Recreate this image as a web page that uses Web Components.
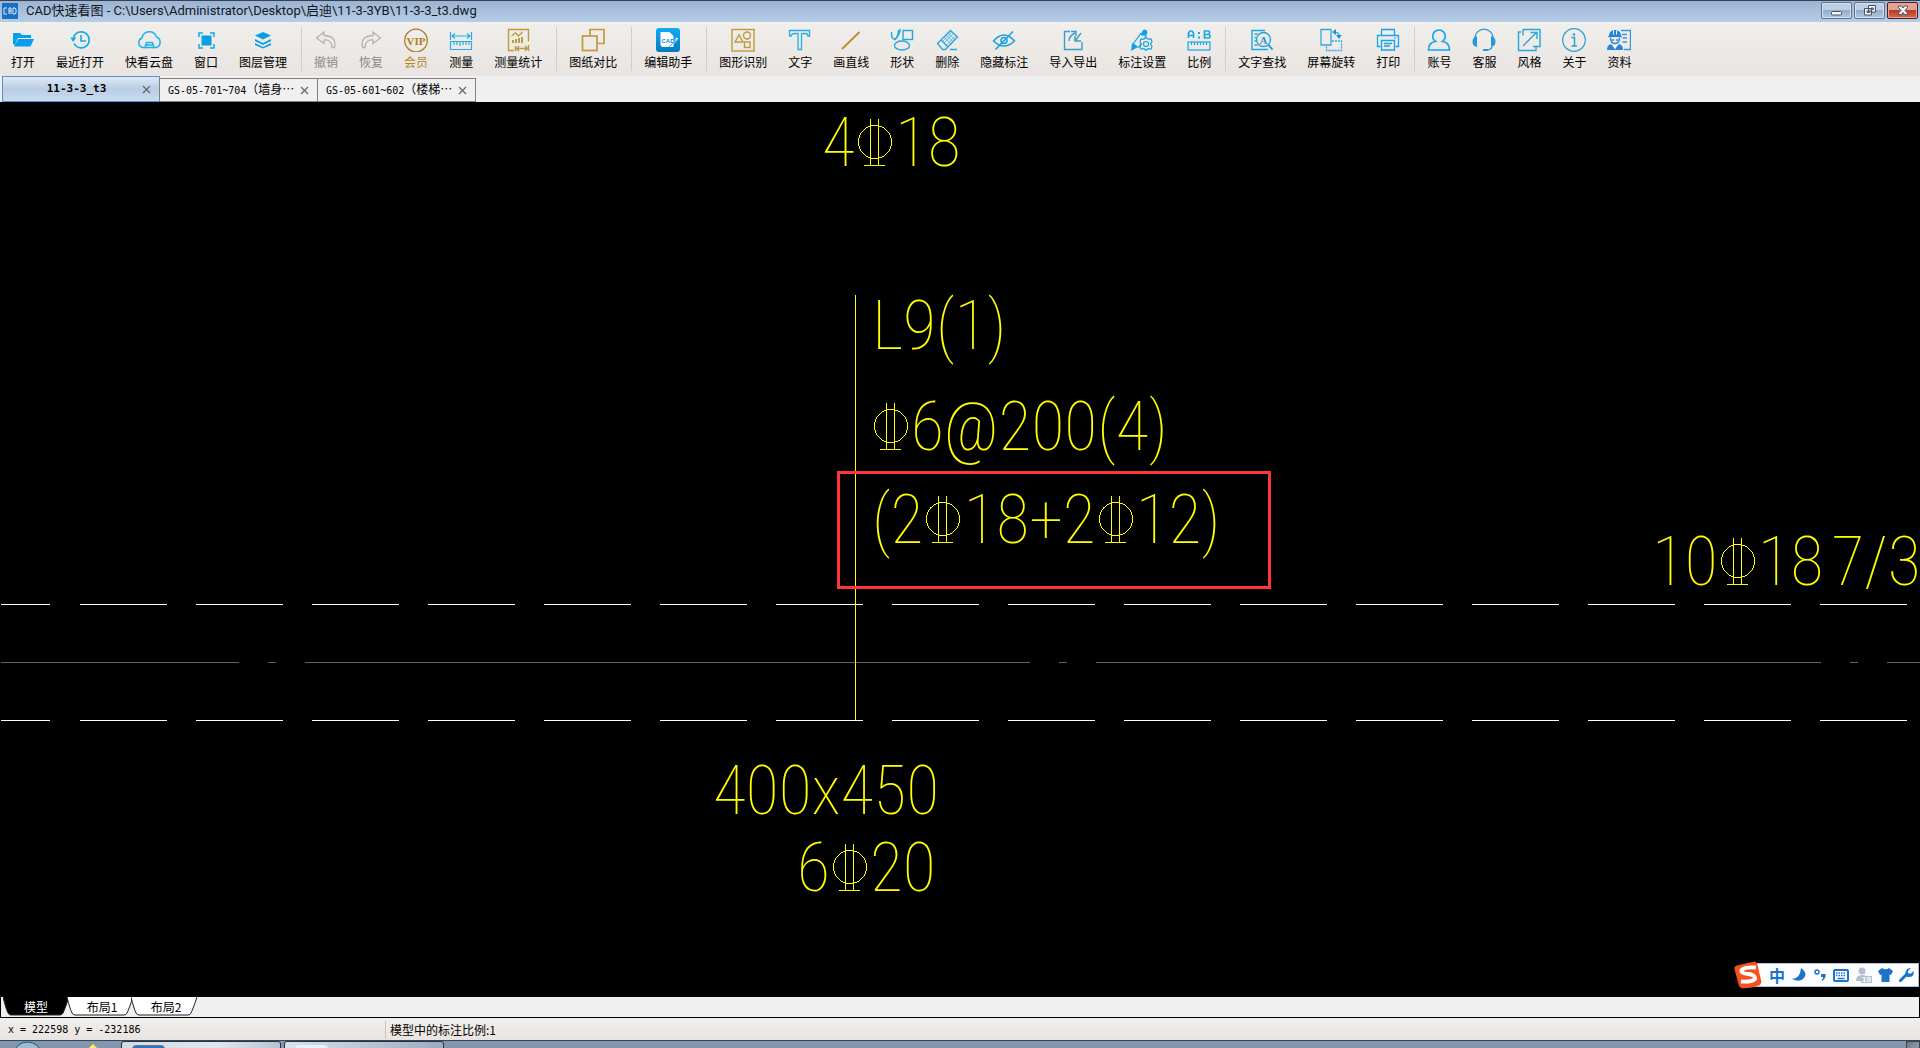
<!DOCTYPE html>
<html lang="zh-CN">
<head>
<meta charset="utf-8">
<title>CAD快速看图</title>
<style>
html,body{margin:0;height:100%}
body{overflow:hidden;font-family:"Liberation Sans","Noto Sans CJK SC",sans-serif;font-size:12px;color:#000;background:#000}
</style>
</head>
<body>
<cad-app></cad-app>
<script>
const define=(name,html,setup)=>{
  const tpl=document.createElement('template');
  tpl.innerHTML=html;
  customElements.define(name,class extends HTMLElement{
    constructor(){super();this.attachShadow({mode:'open'})}
    connectedCallback(){
      if(this.shadowRoot.childNodes.length)return;
      this.shadowRoot.append(tpl.content.cloneNode(true));
      if(setup)setup.call(this,this.shadowRoot);
    }
  });
};
const B='#16a9ea',G='#c09a3e';
const s=(c,w,body)=>`<g fill="none" stroke="${c}" stroke-width="${w}">${body}</g>`;
const ICONS={
open:`<path fill="#079feb" d="M2 5h7l2 2h9v3H7l-3 7-2-1z"/><path fill="#079feb" d="M7.500 11H23l-3.500 7.500H3z"/>`,
recent:s(B,1.600,`<path d="M5.500 9.500a8 8 0 1 1 .5 6"/><path d="M13 7v6h5"/>`)+`<path fill="${B}" d="M2.500 9.500h6L5 14z"/>`,
cloud:s('#1eb0f0',1.500,`<path d="M8.500 19.500H5.500A5 5 0 0 1 5 10a7.500 7.500 0 0 1 14.500-1A5.500 5.500 0 0 1 19 19.500h-2"/><path d="M8 19.500l1.500-5h6l1.500 5zM8.500 17h8"/>`),
window:s(B,1.500,`<path d="M5 9V5h4M16 5h4v4M20 16v4h-4M9 20H5v-4"/>`)+`<rect x="7.500" y="7.500" width="10" height="10" fill="#0c9ee4"/>`,
layers:`<path fill="#089de6" d="M12 4l8 3.500-8 4-8-4zM4 11l8 4 8-4v2l-8 4-8-4zM4 15l8 4 8-4v2l-8 3.500-8-3.500z"/>`,
undo:s('#b4b4b4',1.300,`<path d="M10 4L2.500 10 10 15.500V12q8-.5 8 7.500h2.500Q23 8 10 7.500z"/>`),
redo:s('#b4b4b4',1.300,`<path d="M14 4l7.500 6L14 15.500V12q-8-.5-8 7.500H3.500Q1 8 14 7.500z"/>`),
vip:s('#ac7d2d',1.300,`<circle cx="12" cy="12.500" r="11.300"/>`)+`<text x="2.500" y="17" fill="#b07d20" font-family="Liberation Serif" font-weight="700" font-size="11">VIP</text>`,
measure:s('#26aeea',1.200,`<path d="M1.500 4v8M22.500 4v8M3 8h18M6 5.500L3 8l3 2.500M18 5.500L21 8l-3 2.500M1.500 13.500h21v8h-21zM5 14v3M8 14v3M11 14v4M14 14v3M17 14v3M20 14v3"/>`),
stat:s(G,1.400,`<path d="M8 22.500H2.500v-21h20v12M5.500 8l4-3 3 3 4-4M9.500 18v5M22.500 17v6M11 20.500h10M13 18l-2.500 2.500L13 23M19 18l2.500 2.500L19 23"/><path stroke-width="2" d="M7 15v-3M10 15v-4M13 15v-5M16 15V9"/>`),
compare:s(G,1.700,`<path d="M9 8V1.500h14v14h-7"/><rect x="1.500" y="8" width="14.500" height="14.500"/>`),
edit:`<defs><linearGradient id="e" x2="0" y2="1"><stop stop-color="#12aaf0"/><stop offset="1" stop-color="#0479c4"/></linearGradient></defs><rect width="24" height="24" rx="3" fill="url(#e)"/><path fill="#fff" d="M4.500 4h9l4 4v11H6l-1.500-2z"/><path stroke="#fff" stroke-width="2" d="M14 18l7.500-8"/><path stroke="#0a86d0" stroke-width=".8" d="M13 19l7.500-8"/><text x="5.500" y="14.500" font-size="6" font-weight="700" fill="#0c8dd6" font-family="Liberation Sans">CAD</text>`,
recog:s(G,1.400,`<rect x="1" y="1.500" width="22" height="21.500"/><path d="M4 14l4-7 4 7z"/><circle cx="16" cy="7.500" r="3.500"/><rect x="13.500" y="14" width="5.500" height="5.500"/>`),
text:s('#27aee9',1.300,`<path d="M1.500 2.500h20v5.500h-1.500q0-2.500-3-2.500h-3.500v16h-3.500v-16H6.500q-3 0-3.500 2.500H1.500z"/>`),
line:s('#b98b35',1.800,`<path d="M3 21L20.500 4"/>`),
shape:s('#27a6e0',1.400,`<path d="M1.500 4q0 8 3 7t4-8l1.500-1-.5 3q-3 6-5 7"/><rect x="13" y="2.500" width="9.500" height="9"/><ellipse cx="12" cy="17.500" rx="7.500" ry="4.500"/>`),
erase:s('#2aa6df',1.300,`<path d="M2.500 15.500L15.500 2.500l7 6.500-12 12.500H7.500zM6 12l7 7M15 21.500h7"/><path stroke-width=".7" d="M9 9l7.500 7M11 7l7.500 7M13 5l7.500 7M19 5l-10 10M21 7.500l-10 10M17 3.500L7.500 13.500"/>`),
hide:s('#15a2e4',1.500,`<path d="M1.500 13Q12 1 22.500 13 12 23 1.500 13z"/><circle cx="12" cy="12.500" r="3"/><path d="M21 3.500L3.500 21.500"/>`),
inout:s('#3b9ccb',1.400,`<path d="M9 3.500H3.500v18H21V14"/><path d="M8 13q0-5 6-8M10 3.500h5v4.500M20 5l-5.500 7.500M14 8v5h6"/>`),
annoset:`<path fill="#0ea0e8" d="M13 2q4-2 4.500 3l-2 3-5-1zM2 15l4 2 2 2-7 4z"/>`+s('#13a2e7',1.200,`<path d="M11 5L2.500 17M16.500 7.500L8 20"/><path fill="#eeece8" d="M16 9.500l2 1.700 3-.4 1 3-1.500 2.200 1.500 2.500-1 2.500-3-.3-2 1.800-2-1.800-3 .3-1-2.500 1.500-2.500-1.500-2.200 1-3 3 .4z"/><circle cx="16" cy="16" r="2.500"/>`),
ratio:`<path fill="none" stroke="${B}" stroke-width="1.700" d="M1.500 10V5l1.500-2h2l1.500 2v5M1.500 7.500h5M17.500 3h4l1 1v1.500l-1 1h-4zM17.500 6.500h4.500l1 1v1.500l-1 1h-4.500z"/><path fill="${B}" d="M11 4h2v2h-2zM11 8.500h2v2h-2z"/>`+s(B,1.200,`<rect x="1" y="14" width="22" height="8"/><path d="M4.500 14v3M7.500 14v3M10.500 14v3M13.500 14v3M16.500 14v3M19.500 14v3"/>`),
find:s('#22a6e2',1.400,`<path d="M15 2.500H2v19h16M4.500 6h3M4.500 9.500h1.500M4.500 13h1.500M4.500 17h3"/><circle cx="13.500" cy="11.500" r="7"/><path stroke-width="2" d="M18.500 17l4 4.500"/>`)+`<text x="9.500" y="16" font-size="11" font-weight="700" fill="#2596d0" font-family="Liberation Serif">A</text>`,
rotate:s('#2fa8e0',1.300,`<path d="M2 1.500h10v15.500H2z"/><path stroke-dasharray="2 1" d="M13 13h9.500v9.500H7.500V18"/><path d="M15 4.500q5-1 5 4"/>`)+`<path fill="#1596d8" d="M17 1v6l-4-3zM17 7h6l-3 4z"/>`,
print:s('#1aa5e6',1.300,`<path d="M5.500 7.500V1.500h13v6M4.500 18.500H1.500v-11h21v11h-3M5.500 12.500h13v9.500h-13zM8 15.500h8M8 18h6"/>`)+`<path fill="${B}" d="M18 9.500h2v1h-2z"/>`,
account:s('#11a5f0',1.600,`<path d="M8.500 13.500a6.300 6.300 0 1 1 7 0q7 1 7 8.500h-21q0-7.500 7-8.500z"/>`),
service:s('#2b9dd8',1.300,`<path d="M3 12C2 -2.500 22 -2.500 21 12M20 19q-1 3-6 3"/>`)+`<path fill="#2598db" d="M5 8v11q-4.500-1-4.500-5.500T5 8zM19 8v11q4.500-1 4.500-5.500T19 8zM11 21h5v2h-5z"/>`,
style:s('#2aa5dd',1.400,`<path d="M6 1.500h17v17H16M4 4H1.500v18.500H19V19M6 1.500v6M6 18L20 4M13.500 4.500H20V11"/>`),
about:s('#2b9fd8',1.200,`<circle cx="12" cy="12" r="11.300"/><path stroke-width="1.500" d="M9.500 9.500h3v8M9.500 18h5.500"/>`)+`<circle cx="12" cy="6.500" r="1.300" fill="#2b9fd8"/>`,
docs:`<path fill="#2587dc" d="M2 8q0-5 5-6h2q5 1 5 6h1v1H1V8zM0 22q0-5 4-6l4 5 4-5q4 1 4 6z"/><path fill="#fff" d="M6 2.500h1v4H6zM9 2.500h1v4H9zM6 17h4l-2 4z"/>`+s('#2587dc',1.400,`<path d="M3.500 9.500q0 6 4.500 6t4.500-6M5 12h2M9 12h2"/>`)+s('#3798e0',1.400,`<path d="M14 2.500h9.500v19H17M15 6.500h5M15.500 10h4.500M15.500 14h4.500"/>`)
};

define('window-button',`<style>
:host{display:block}
button{display:grid;place-items:center;width:31px;height:17px;padding:0;border:1px solid #5c7595;border-radius:2px;box-shadow:inset 0 0 0 1px #d2e0f0;background:linear-gradient(#bccfe4 48%,#92adca 50%,#b3cbe4)}
:host([kind=close]) button{border-color:#541a24;box-shadow:inset 0 0 0 1px #e2a49c;background:linear-gradient(#e2a294 48%,#bd3a22 50%,#cf6b50)}
svg{display:block}
</style><button><svg width="14" height="11" fill="#f4f7fb" stroke="#4a5364"></svg></button>`,function(r){
  const k=this.getAttribute('kind');
  r.querySelector('svg').innerHTML={
    min:'<rect x="1.500" y="6.500" width="10" height="3.500" rx="1"/>',
    restore:'<path d="M5.500 .5h7v6.500h-7zM8 3h2.500v1.500H8zM1.500 3.500h7v6.500h-7zM4 6h2v1.500H4z" fill-rule="evenodd"/>',
    close:'<path d="M2.500 1h3L7 3l1.500-2h3v1.500L9 5.500l2.500 2.500v1.500h-3L7 7.500 5.500 9.500h-3V8L5 5.500 2.500 2.500z"/>'}[k];
  const names={min:'最小化',restore:'还原',close:'关闭'};
  r.querySelector('button').setAttribute('aria-label',names[k]);
});

define('title-bar',`<style>
:host{display:flex;align-items:center;box-sizing:border-box;height:22px;flex:none;padding:0 2px 2px;border-top:1px solid #3b3f4a;background:linear-gradient(#9ab4d3,#b6cde6);gap:8px}
h1{flex:1;margin:0;font:400 13px/18px Roboto,"Noto Sans CJK SC",sans-serif;color:#14171c;white-space:nowrap}
.b{display:flex;gap:2px;align-self:flex-start;padding-top:1px}
svg{flex:none}
</style><svg width="16" height="16"><rect width="16" height="16" rx="1" fill="#1a6fc0"/><path d="M5 5H2v6h3M7 11V5h2v6M7 8h2M11 5h2l1 1v4l-1 1h-2z" fill="none" stroke="#d8ecff"/></svg><h1><slot></slot></h1><div class="b"><window-button kind="min"></window-button><window-button kind="restore"></window-button><window-button kind="close"></window-button></div>`);

define('tool-button',`<style>
:host{display:block;flex:none}
button{display:flex;flex-direction:column;align-items:center;gap:2px;border:0;background:none;padding:6px 11px 0 10px;font:12px/16px "Noto Sans CJK SC",sans-serif;color:#000;white-space:nowrap}
:host([tone=off]) button{color:#8c8c8c}
:host([tone=gold]) button{color:#b8872c}
svg{display:block}
</style><button><svg width="24" height="24" viewBox="0 0 24 24"></svg><span><slot></slot></span></button>`,function(r){r.querySelector('svg').innerHTML=ICONS[this.getAttribute('icon')]});

define('tool-group',`<style>:host{display:flex;flex:none}
:host(:not(:last-of-type))::after{content:"";width:1px;margin:5px 2px 5px 3px;background:#cfcfcf}</style><slot></slot>`);

define('tool-bar',`<style>:host{display:flex;flex:none;box-sizing:border-box;height:54px;padding-left:1px;background:linear-gradient(#f0efeb,#e9e4e1);overflow:hidden}</style><slot></slot>`);

define('doc-tab',`<style>
:host{display:flex;align-items:center;box-sizing:border-box;width:159px;height:24px;padding:0 8px;border:1px solid #808080;background:#f0f0f0;margin-left:-1px;font:10px/16px "DejaVu Sans Mono","Noto Sans CJK SC",monospace}
:host([active]){width:158px;height:26px;margin-left:0;border-color:#5c8fce;background:linear-gradient(#dfe9f5,#b9cde5 50%,#c9dbee);font-size:11px;font-weight:700}
.t{flex:1;white-space:nowrap}
:host([active]) .t{text-align:center}
button{border:0;background:none;padding:0;display:block}
svg{display:block}
</style><span class="t"><slot></slot></span><button aria-label="关闭标签"><svg width="9" height="9"><path d="M1 1l7 7M8 1L1 8" stroke="#666" stroke-width="1.200"/></svg></button>`);
define('doc-tabs',`<style>:host{display:flex;flex:none;align-items:flex-end;height:26px;padding-left:2px;background:#f0f0f0}
::slotted(*){flex:none}</style><slot></slot>`);

define('rebar-mark',`<style>:host{display:block;flex:none;padding:0 3px}svg{display:block}</style><svg width="34" height="48" role="img" aria-label="Φ" fill="none" stroke="#ff0" shape-rendering="crispEdges"><circle cx="17" cy="23" r="16.500"/><path d="M12.500 0v46M20.500 0v46M6 46.500h21"/></svg>`);
define('cad-note',`<style>:host{position:absolute;left:var(--x);top:var(--y);display:flex;align-items:center;font:100 68px/80px "Roboto Condensed","Liberation Sans Narrow",sans-serif;color:#ff0;white-space:pre}</style><slot></slot>`);
define('mark-box',`<style>:host{position:absolute;box-sizing:border-box;left:837px;top:369px;width:434px;height:118px;border:3px solid #ff3636}</style>`);

define('cad-canvas',`<style>
:host{display:block;flex:1;position:relative;background:#000;overflow:hidden;min-height:0}
.l{position:absolute;inset:0;width:100%;height:100%}
</style><svg class="l" shape-rendering="crispEdges">
<g stroke="#fff" stroke-dasharray="87 29"><path d="M1 502.500H50M1 618.500H50" stroke-dasharray="none"/><line x1="80" x2="100%" y1="502.500" y2="502.500"/><line x1="80" x2="100%" y1="618.500" y2="618.500"/></g>
<line x1="1" x2="100%" y1="560.500" y2="560.500" stroke="#646464" stroke-dasharray="725 29 8 29" stroke-dashoffset="487"/>
<path stroke="#ff0" d="M855.500 193V618"/></svg><slot></slot>`);

define('ime-bar',`<style>
:host{position:absolute;right:1px;bottom:8px;display:flex;align-items:center}
.logo{position:relative;z-index:1;margin-right:-12px;flex:none}
.bar{display:flex;align-items:center;gap:6px;box-sizing:border-box;height:24px;padding:0 4px 0 17px;border:1px solid #b3c3d4;background:#fbfdff}
b{font:700 16px/20px "Noto Sans CJK SC",sans-serif;color:#1d73c8}
svg{display:block}
</style><svg class="logo" width="29" height="28"><path d="M3 4.500Q13 2 21 .5l2 1.500 4.500 19-1.500 3Q15 28 7 27l-2-2L.5 8Q0 5 3 4.500z" fill="#f4511e"/><path d="M22 6.500Q11 5.500 7.500 9 6.500 12.500 14 13t7 5Q17 21.500 7 20.500" fill="none" stroke="#fff" stroke-width="3.800"/></svg>
<div class="bar"><b>中</b>
<svg width="16" height="16" fill="#1d73c8"><path d="M10 1q7 5 3 10t-12 1q8 0 9-11z"/></svg>
<svg width="14" height="14" fill="#1d73c8"><circle cx="4" cy="4" r="2" fill="none" stroke="#1d73c8" stroke-width="1.500"/><path d="M8 6h4.500q1 4-3.500 7l-.5-1q2-1 1.500-3H8z"/></svg>
<svg width="16" height="13"><rect x="1" y="1" width="14" height="11" rx="1" fill="#fff" stroke="#1d73c8" stroke-width="2"/><path d="M3 4h10M3 6.500h10" stroke="#1d73c8" stroke-width="1.500" stroke-dasharray="1.500 1"/><path d="M4.500 9.500h7" stroke="#1d73c8" stroke-width="1.500"/></svg>
<svg width="17" height="16" fill="#b4bfd2"><circle cx="7" cy="4" r="3.500"/><path d="M1 14q0-6 6-6 4 0 5 2H6v4z"/><rect x="6" y="9" width="11" height="7" fill="#b4bfd2"/><text x="7" y="15" font-size="8" font-weight="700" font-family="Liberation Sans" fill="#fff">19</text></svg>
<svg width="15" height="14" fill="#1d73c8"><path d="M4 0q3.500 2.500 7 0l4 3-2 4-1.500-.5V14h-8V6.500L2 7 0 3z"/></svg>
<svg width="15" height="14"><path d="M1.500 12.500L8 6" stroke="#1d73c8" stroke-width="3" stroke-linecap="round"/><path d="M12 0L9 3v2.500h3L14.500 3q1 6-4.500 6T7 3q1-3 5-3z" fill="#1d73c8"/></svg></div>`);

define('sheet-tab',`<style>
:host{display:grid;width:66px;height:19px;margin-right:-2px}
svg,button{grid-area:1/1}
svg{display:block}
button{border:0;background:none;padding:0 0 0 4px;font:12px/18px "Noto Sans CJK SC",sans-serif;color:#000}
:host([active]) button{color:#fff;padding:0}
path{fill:#fff;stroke:#222}
:host([active]) path{fill:#000}
</style><svg width="66" height="19"><path d="M0 0Q3 12 5 16 6 18 8 18H57Q59 18 60 16 62 12 66 0"/></svg><button><slot></slot></button>`);
define('sheet-tabs',`<style>:host{display:flex;flex:none;box-sizing:border-box;height:21px;padding:0 0 2px 2px;border:solid #000;border-width:0 1px 1px;background:#f0f0f0}</style><slot></slot>`);

define('status-bar',`<style>:host{display:flex;flex:none;align-items:center;box-sizing:border-box;height:22px;padding:1px 0 0 8px;background:linear-gradient(#f0efeb,#e9e4e1);font:10px/18px "DejaVu Sans Mono",monospace;white-space:pre}
.c{width:377px}.r{font:12px/18px "Noto Sans CJK SC",sans-serif;border-left:1px solid #c9c7c4;padding-left:4px}</style><span class="c"><slot name="coords"></slot></span><span class="r"><slot name="scale"></slot></span>`);

define('task-bar',`<style>
:host{display:flex;flex:none;box-sizing:border-box;height:8px;overflow:hidden;border-top:1px solid #33485e;background:#8495ae;padding-left:13px;align-items:flex-start}
svg{display:block;flex:none}
.orb{margin-right:46px}.y{margin-right:20px}
.w{box-sizing:border-box;width:160px;height:30px;margin-right:3px;border:1px solid #28323e;border-radius:3px;background:linear-gradient(90deg,#d3dae3,#e2e6ec 60%,#b6c3d2);padding:3px 10px}
.w+.w{background:linear-gradient(90deg,#dae2eb,#9babc0)}
.i{width:31px;height:24px;border-radius:4px;background:#2675c9;border:1px solid #777}
.w+.w .i{background:#e6f3fd;border-color:#e6f3fd}
.s{flex:1}.d{width:14px;height:30px;box-sizing:border-box;border:1px solid #39434f;background:linear-gradient(135deg,#6d7887,#bcc5d1)}
</style><svg class="orb" width="29" height="8"><ellipse cx="14.500" cy="14" rx="14" ry="13" fill="#9fbbd0" stroke="#1f5277"/></svg><svg class="y" width="13" height="8"><path d="M0 8l5-5 5 5z" fill="#fff15a"/></svg><div class="w"><div class="i"></div></div><div class="w"><div class="i"></div></div><div class="s"></div><div class="d"></div>`);

define('cad-app',`<style>
:host{display:flex;flex-direction:column;height:100vh}
.k{font:12px/16px "Noto Sans CJK SC",sans-serif}
.far{margin-left:8px}
</style>
<title-bar>CAD快速看图 - C:\\Users\\Administrator\\Desktop\\启迪\\11-3-3YB\\11-3-3_t3.dwg</title-bar>
<tool-bar>
<tool-group><tool-button icon="open">打开</tool-button><tool-button icon="recent">最近打开</tool-button><tool-button icon="cloud">快看云盘</tool-button><tool-button icon="window">窗口</tool-button><tool-button icon="layers">图层管理</tool-button></tool-group>
<tool-group><tool-button icon="undo" tone="off">撤销</tool-button><tool-button icon="redo" tone="off">恢复</tool-button><tool-button icon="vip" tone="gold">会员</tool-button><tool-button icon="measure">测量</tool-button><tool-button icon="stat">测量统计</tool-button></tool-group>
<tool-group><tool-button icon="compare">图纸对比</tool-button></tool-group>
<tool-group><tool-button icon="edit">编辑助手</tool-button></tool-group>
<tool-group><tool-button icon="recog">图形识别</tool-button><tool-button icon="text">文字</tool-button><tool-button icon="line">画直线</tool-button><tool-button icon="shape">形状</tool-button><tool-button icon="erase">删除</tool-button><tool-button icon="hide">隐藏标注</tool-button><tool-button icon="inout">导入导出</tool-button><tool-button icon="annoset">标注设置</tool-button><tool-button icon="ratio">比例</tool-button></tool-group>
<tool-group><tool-button icon="find">文字查找</tool-button><tool-button icon="rotate">屏幕旋转</tool-button><tool-button icon="print">打印</tool-button></tool-group>
<tool-group><tool-button icon="account">账号</tool-button><tool-button icon="service">客服</tool-button><tool-button icon="style">风格</tool-button><tool-button icon="about">关于</tool-button><tool-button icon="docs">资料</tool-button></tool-group>
</tool-bar>
<doc-tabs><doc-tab active>11-3-3_t3</doc-tab><doc-tab>GS-05-701~704<span class="k">（墙身⋯</span></doc-tab><doc-tab>GS-05-601~602<span class="k">（楼梯⋯</span></doc-tab></doc-tabs>
<cad-canvas>
<cad-note style="--x:822px;--y:1px"><span>4</span><rebar-mark></rebar-mark><span>18</span></cad-note>
<cad-note style="--x:872px;--y:184px"><span>L9(1)</span></cad-note>
<cad-note style="--x:871px;--y:285px"><rebar-mark></rebar-mark><span>6@200(4)</span></cad-note>
<cad-note style="--x:872px;--y:378px"><span>(2</span><rebar-mark></rebar-mark><span>18+2</span><rebar-mark></rebar-mark><span>12)</span></cad-note>
<cad-note style="--x:1652px;--y:420px"><span>10</span><rebar-mark></rebar-mark><span>18</span><span class="far">7/3</span></cad-note>
<cad-note style="--x:713px;--y:649px"><span>400x450</span></cad-note>
<cad-note style="--x:797px;--y:726px"><span>6</span><rebar-mark></rebar-mark><span>20</span></cad-note>
<mark-box></mark-box>
<ime-bar></ime-bar>
</cad-canvas>
<sheet-tabs><sheet-tab active>模型</sheet-tab><sheet-tab>布局1</sheet-tab><sheet-tab>布局2</sheet-tab></sheet-tabs>
<status-bar><span slot="coords">x = 222598 y = -232186</span><span slot="scale">模型中的标注比例:1</span></status-bar>
<task-bar></task-bar>`);
</script>
</body>
</html>
